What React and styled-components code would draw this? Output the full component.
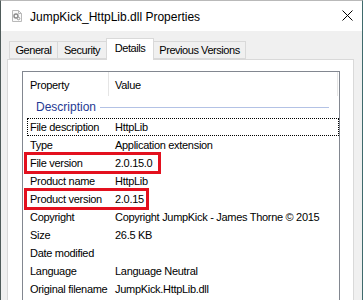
import React from 'react';
import styled, { createGlobalStyle } from 'styled-components';

const GlobalStyle = createGlobalStyle`
  html, body {
    margin: 0;
    padding: 0;
    height: 300px;
    overflow: hidden;
    background: #ffffff;
  }
  body {
    font-family: "Liberation Sans", Arial, sans-serif;
  }
`;

const Window = styled.div`
  width: 363px;
  height: 300px;
  box-sizing: border-box;
  border-top: 1px solid #b9b9b9;
  border-left: 1px solid #4f5b5a;
  border-right: 1px solid #3f6a6c;
  display: flex;
  flex-direction: column;
  overflow: hidden;
`;

const TitleBar = styled.div`
  height: 30px;
  flex-shrink: 0;
  background: #ffffff;
  display: flex;
  align-items: center;
  padding: 0 9px 0 11px;
`;

const TitleText = styled.span`
  font-size: 12px;
  color: #000;
  margin-left: 8px;
  margin-top: 1px;
`;

const CloseButton = styled.div`
  margin-left: auto;
  width: 11px;
  height: 11px;
  display: flex;
  margin-top: -2px;
`;

const Body = styled.div`
  flex: 1;
  background: #f0f0f0;
  padding: 7px 8px 0 6px;
  display: flex;
  flex-direction: column;
`;

const TabStrip = styled.div`
  display: flex;
  align-items: flex-end;
  height: 21px;
  margin-left: 2px;
  position: relative;
  z-index: 1;
`;

const Tab = styled.div`
  box-sizing: border-box;
  width: ${(p) => p.width}px;
  height: ${(p) => (p.active ? 22 : 18)}px;
  margin-bottom: ${(p) => (p.active ? -1 : 0)}px;
  margin-left: -1px;
  background: ${(p) => (p.active ? '#ffffff' : '#f0f0f0')};
  border: 1px solid #d9d9d9;
  border-bottom: ${(p) => (p.active ? 'none' : '1px solid #d9d9d9')};
  font-size: 11px;
  letter-spacing: -0.45px;
  color: #000;
  display: flex;
  align-items: center;
  justify-content: center;
  padding-bottom: ${(p) => (p.active ? 3 : 0)}px;
  &:first-child {
    margin-left: 0;
  }
`;

const Panel = styled.div`
  flex: 1;
  background: #ffffff;
  border: 1px solid #d9d9d9;
  border-bottom: none;
  padding: 11px 13px 0 14px;
  display: flex;
`;

const ListView = styled.div`
  flex: 1;
  border: 1px solid #828790;
  border-bottom: none;
  background: #ffffff;
  font-size: 11px;
  letter-spacing: -0.3px;
  color: #000;
`;

const Header = styled.div`
  display: grid;
  grid-template-columns: 86px 1fr;
  height: 24px;
  margin-right: 1px;
`;

const HeaderCell = styled.div`
  display: flex;
  align-items: center;
  padding-left: ${(p) => p.pad}px;
  border-right: 1px solid #e5e5e5;
  padding-top: 2px;
`;

const Group = styled.div`
  height: 22px;
  display: flex;
  align-items: center;
  padding: 0 10px 0 13px;
`;

const GroupTitle = styled.span`
  font-size: 12px;
  letter-spacing: 0;
  color: #1f3a93;
`;

const GroupLine = styled.div`
  flex: 1;
  height: 1px;
  margin-left: 4px;
  background: #b3c2e5;
`;

const Row = styled.div`
  position: relative;
  box-sizing: border-box;
  height: 18px;
  margin-left: 4px;
  display: grid;
  grid-template-columns: 85px 1fr;
  align-items: center;
  border: 1px dotted ${(p) => (p.focused ? '#000' : 'transparent')};
`;

const Cell = styled.div`
  padding-left: ${(p) => p.pad}px;
  white-space: nowrap;
  overflow: hidden;
`;

const Highlight = styled.div`
  position: absolute;
  left: -4px;
  top: -3px;
  width: ${(p) => p.width}px;
  height: 22px;
  box-sizing: border-box;
  border: 3px solid #e3101e;
  pointer-events: none;
`;

const FileIcon = () => (
  <svg width="10" height="12" viewBox="0 0 10 12">
    <path d="M0.5 0.5 H6.5 L9.5 3.5 V11.5 H0.5 Z" fill="#fafafa" stroke="#b9b9b9" />
    <path d="M6.5 0.5 V3.5 H9.5" fill="none" stroke="#b9b9b9" />
    <circle cx="4" cy="6" r="2" fill="none" stroke="#8a8a8a" strokeWidth="1.4" />
    <circle cx="6.5" cy="8.5" r="1.3" fill="none" stroke="#9a9a9a" strokeWidth="1" />
  </svg>
);

const CloseIcon = () => (
  <svg width="11" height="11" viewBox="0 0 11 11">
    <path d="M0.5 0.5 L10.5 10.5 M10.5 0.5 L0.5 10.5" stroke="#000" strokeWidth="1" />
  </svg>
);

const tabs = [
  { label: 'General', width: 49 },
  { label: 'Security', width: 50 },
  { label: 'Details', width: 48, active: true },
  { label: 'Previous Versions', width: 93 },
];

const rows = [
  { name: 'File description', value: 'HttpLib', focused: true },
  { name: 'Type', value: 'Application extension' },
  { name: 'File version', value: '2.0.15.0', mark: 137 },
  { name: 'Product name', value: 'HttpLib' },
  { name: 'Product version', value: '2.0.15', mark: 125 },
  { name: 'Copyright', value: 'Copyright JumpKick - James Thorne \u00a9  2015' },
  { name: 'Size', value: '26.5 KB' },
  { name: 'Date modified', value: '' },
  { name: 'Language', value: 'Language Neutral' },
  { name: 'Original filename', value: 'JumpKick.HttpLib.dll' },
];

const App = () => {
  return (
    <>
      <GlobalStyle />
      <Window>
        <TitleBar>
          <FileIcon />
          <TitleText>JumpKick_HttpLib.dll Properties</TitleText>
          <CloseButton>
            <CloseIcon />
          </CloseButton>
        </TitleBar>
        <Body>
          <TabStrip>
            {tabs.map((t) => (
              <Tab key={t.label} width={t.width} active={t.active}>
                {t.label}
              </Tab>
            ))}
          </TabStrip>
          <Panel>
            <ListView>
              <Header>
                <HeaderCell pad={7}>Property</HeaderCell>
                <HeaderCell pad={6}>Value</HeaderCell>
              </Header>
              <Group>
                <GroupTitle>Description</GroupTitle>
                <GroupLine />
              </Group>
              {rows.map((r, i) => (
                <Row key={i} focused={r.focused}>
                  <Cell pad={2}>{r.name}</Cell>
                  <Cell pad={2}>{r.value}</Cell>
                  {r.mark && <Highlight width={r.mark} />}
                </Row>
              ))}
            </ListView>
          </Panel>
        </Body>
      </Window>
    </>
  );
};

export default App;
